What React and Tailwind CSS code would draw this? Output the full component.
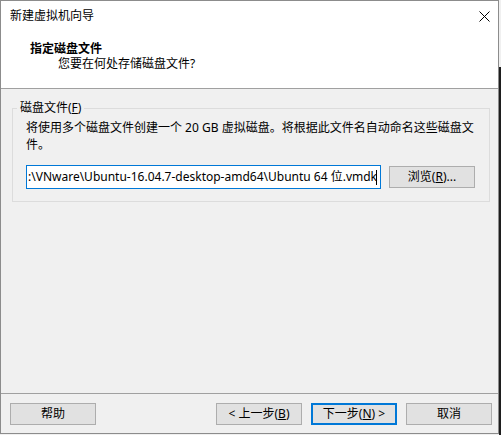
export default function App() {
  const font = "font-['Noto_Sans','Noto_Sans_CJK_SC',sans-serif]";
  const btn =
    "w-[86px] h-[22px] flex items-center justify-center bg-[#e1e1e1] border border-[#adadad] text-[12px] text-black leading-none";

  return (
    <div className={`w-[501px] h-[435px] flex bg-[#f0f0f0] ${font}`}>
      <div className="w-[499px] h-[434px] border border-[#8c8c8c] flex flex-col bg-[#f0f0f0]">
        {/* title bar */}
        <div className="h-[30px] bg-white flex items-center justify-between pl-[9px] pr-[8px]">
          <span className="text-[12px] text-black">新建虚拟机向导</span>
          <svg width="11" height="11" viewBox="0 0 11 11">
            <path d="M0.5 0.5L10.5 10.5M10.5 0.5L0.5 10.5" stroke="#000" strokeWidth="1" />
          </svg>
        </div>

        {/* header */}
        <div className="h-[58px] bg-white border-b border-[#a0a0a0] pl-[29px] pt-[9px]">
          <div className="text-[12px] font-bold text-black leading-[18px]">指定磁盘文件</div>
          <div className="text-[12px] text-black leading-[16px] pl-[28px] mt-[-2px]">
            您要在何处存储磁盘文件?
          </div>
        </div>

        {/* body */}
        <div className="flex-1 pl-[11px] pt-[11px]">
          <fieldset className="w-[478px] border border-[#dcdcdc]">
            <legend className="ml-[4px] px-[3px] text-[12px] leading-[16px] text-black">
              磁盘文件(<span className="underline">F</span>)
            </legend>
            <div className="pl-[13px] pr-[12px] pb-[12px]">
              <p className="text-[12px] leading-[17px] text-black mt-[3px]">
                将使用多个磁盘文件创建一个 20 GB 虚拟磁盘。将根据此文件名自动命名这些磁盘文
                <br />
                件。
              </p>
              <div className="flex items-center gap-[8px] mt-[12px]">
                <div className="w-[355px] h-[24px] bg-white border border-[#0078d7] flex items-center pl-[1px] overflow-hidden whitespace-nowrap">
                  <span className="text-[12px] text-black">
                    {":\\VNware\\Ubuntu-16.04.7-desktop-amd64\\Ubuntu 64 位.vmdk"}
                  </span>
                  <span className="w-[1px] h-[15px] bg-black ml-[-1px]" />
                </div>
                <button className={btn}>
                  浏览(<span className="underline">R</span>)...
                </button>
              </div>
            </div>
          </fieldset>
        </div>

        {/* footer */}
        <div className="border-t border-[#a0a0a0] flex items-center pl-[9px] pr-[6px] pt-[9px] pb-[8px]">
          <button className={btn}>帮助</button>
          <div className="flex-1" />
          <div className="flex gap-[9px]">
            <button className={btn}>
              &lt; 上一步(<span className="underline">B</span>)
            </button>
            <button className="w-[86px] h-[22px] flex items-center justify-center bg-[#e1e1e1] border-2 border-[#0078d7] text-[12px] text-black leading-none">
              下一步(<span className="underline">N</span>) &gt;
            </button>
            <button className={btn}>取消</button>
          </div>
        </div>
      </div>
      <div className="flex-1 flex flex-col">
        <div className="h-[67px]" />
        <div className="flex-1 bg-[#1e1e1e]" />
      </div>
    </div>
  );
}
